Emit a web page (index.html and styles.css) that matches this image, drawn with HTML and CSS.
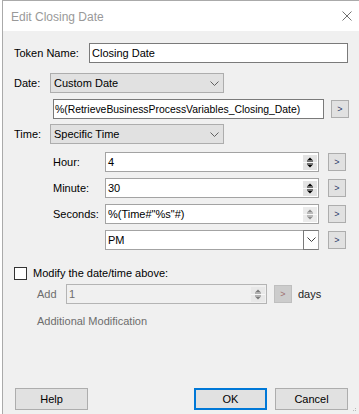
FILE: index.html
```html
<!DOCTYPE html>
<html>
<head>
<meta charset="utf-8">
<link rel="stylesheet" href="styles.css">
</head>
<body>
<div class="win">
  <div class="titlebar">
    <span class="title">Edit Closing Date</span>
    <svg class="close" width="10" height="10" viewBox="0 0 10 10"><path d="M0.5 0.5L9.5 9.5M9.5 0.5L0.5 9.5" stroke="#707070" stroke-width="1" fill="none"/></svg>
  </div>
  <div class="content">
    <div class="row r-token">
      <span class="lbl w-token">Token Name:</span>
      <div class="field f-token">Closing Date</div>
    </div>
    <div class="row r-date">
      <span class="lbl w-date">Date:</span>
      <div class="combo"><span class="ctext">Custom Date</span><svg class="chev" width="9" height="5" viewBox="0 0 9 5"><path d="M0.5 0.5L4.5 4.5L8.5 0.5" stroke="#606060" fill="none"/></svg></div>
    </div>
    <div class="row r-expr">
      <div class="field f-expr">%(RetrieveBusinessProcessVariables_Closing_Date)</div>
      <div class="gt">&gt;</div>
    </div>
    <div class="row r-time">
      <span class="lbl w-date">Time:</span>
      <div class="combo"><span class="ctext">Specific Time</span><svg class="chev" width="9" height="5" viewBox="0 0 9 5"><path d="M0.5 0.5L4.5 4.5L8.5 0.5" stroke="#606060" fill="none"/></svg></div>
    </div>
    <div class="row r-sub r-hour">
      <span class="lbl w-sub">Hour:</span>
      <div class="field f-num"><span class="ftext">4</span>
        <svg class="spin" width="14" height="15" viewBox="0 0 14 15"><rect width="14" height="15" fill="#e3e3e3"/><rect x="0" y="7" width="14" height="1" fill="#f7f7f7"/><path d="M7 2.5L9.5 5H4.5Z" fill="#000"/><rect x="4" y="5.5" width="6" height="1" fill="#000"/><rect x="4" y="8.5" width="6" height="1" fill="#000"/><path d="M4.5 10H9.5L7 12.5Z" fill="#000"/></svg>
      </div>
      <div class="gt">&gt;</div>
    </div>
    <div class="row r-sub">
      <span class="lbl w-sub">Minute:</span>
      <div class="field f-num"><span class="ftext">30</span>
        <svg class="spin" width="14" height="15" viewBox="0 0 14 15"><rect width="14" height="15" fill="#e3e3e3"/><rect x="0" y="7" width="14" height="1" fill="#f7f7f7"/><path d="M7 2.5L9.5 5H4.5Z" fill="#000"/><rect x="4" y="5.5" width="6" height="1" fill="#000"/><rect x="4" y="8.5" width="6" height="1" fill="#000"/><path d="M4.5 10H9.5L7 12.5Z" fill="#000"/></svg>
      </div>
      <div class="gt">&gt;</div>
    </div>
    <div class="row r-sub">
      <span class="lbl w-sub">Seconds:</span>
      <div class="field f-num"><span class="ftext">%(Time#"%s"#)</span>
        <svg class="spin" width="14" height="15" viewBox="0 0 14 15"><rect width="14" height="15" fill="#ebebeb"/><rect x="0" y="7" width="14" height="1" fill="#f9f9f9"/><path d="M7 2.5L9.5 5H4.5Z" fill="#8a8a8a"/><rect x="4" y="5.5" width="6" height="1" fill="#8a8a8a"/><rect x="4" y="8.5" width="6" height="1" fill="#8a8a8a"/><path d="M4.5 10H9.5L7 12.5Z" fill="#8a8a8a"/></svg>
      </div>
      <div class="gt">&gt;</div>
    </div>
    <div class="row r-sub r-pm">
      <div class="pmcombo"><span class="ftext">PM</span><span class="pmbtn"><svg width="9" height="5" viewBox="0 0 9 5"><path d="M0.5 0.5L4.5 4.5L8.5 0.5" stroke="#404040" fill="none"/></svg></span></div>
      <div class="gt">&gt;</div>
    </div>
    <div class="row r-check">
      <span class="box"></span>
      <span class="lbl">Modify the date/time above:</span>
    </div>
    <div class="row r-add">
      <span class="lbl dis w-add">Add</span>
      <div class="field f-add"><span class="ftext dis">1</span>
        <svg class="spin" width="14" height="15" viewBox="0 0 14 15"><rect width="14" height="15" fill="#e8e8e8"/><rect x="0" y="7" width="14" height="1" fill="#f7f7f7"/><path d="M7 2.5L9.5 5H4.5Z" fill="#7a7a7a"/><rect x="4" y="5.5" width="6" height="1" fill="#7a7a7a"/><rect x="4" y="8.5" width="6" height="1" fill="#7a7a7a"/><path d="M4.5 10H9.5L7 12.5Z" fill="#7a7a7a"/></svg>
      </div>
      <div class="gt gt-dis">&gt;</div>
      <span class="lbl days">days</span>
    </div>
    <div class="row r-addmod">
      <span class="lbl dis">Additional Modification</span>
    </div>
    <div class="row r-buttons">
      <div class="btn b-help">Help</div>
      <div class="btn b-ok">OK</div>
      <div class="btn b-cancel">Cancel</div>
    </div>
  </div>
  <svg class="grip" width="4" height="4" viewBox="0 0 4 4"><rect x="2" y="0" width="1" height="1" fill="#bbb"/><rect x="0" y="2" width="1" height="1" fill="#bbb"/><rect x="2" y="2" width="1" height="1" fill="#bbb"/></svg>
</div>
</body>
</html>
```

FILE: styles.css
```css
* { box-sizing: border-box; }
html, body {
  margin: 0;
  padding: 0;
  background: #ffffff;
  width: 359px;
  height: 414px;
  overflow: hidden;
}
body {
  font-family: "Liberation Sans", Arial, sans-serif;
  font-size: 11px;
  color: #000;
}
.win {
  position: relative;
  margin-left: 2px;
  width: 357px;
  height: 414px;
  border-left: 1px solid #aaaaaa;
  border-top: 1px solid #aaaaaa;
  background: #f0f0f0;
  display: flex;
  flex-direction: column;
}
.titlebar {
  height: 30px;
  background: #ffffff;
  display: flex;
  align-items: center;
  justify-content: space-between;
  padding: 0 7px 0 8px;
  flex: none;
}
.title {
  font-size: 12px;
  color: #999999;
  margin-top: 1px;
}
.close { display: block; margin-top: 0; }
.content {
  padding: 12px 0 0 11px;
  display: flex;
  flex-direction: column;
}
.row {
  display: flex;
  align-items: center;
  height: 20px;
}
.lbl { white-space: nowrap; }
.w-token { width: 75px; flex: none; }
.w-date { width: 36px; flex: none; }
.w-sub { width: 52px; flex: none; }
.w-add { width: 29px; flex: none; }
.field {
  height: 20px;
  background: #fff;
  border: 1px solid #7a7a7a;
  display: flex;
  align-items: center;
  padding-left: 2px;
  white-space: nowrap;
  overflow: hidden;
}
.f-token { width: 259px; }
.r-date { margin-top: 10px; }
.combo {
  width: 174px;
  height: 20px;
  background: #e1e1e1;
  border: 1px solid #adadad;
  display: flex;
  align-items: center;
  justify-content: space-between;
  padding: 0 4px 0 3px;
}
.chev { display: block; }
.r-expr { margin-top: 6px; padding-left: 39px; }
.f-expr { width: 271px; padding-left: 1px; font-size: 10.4px; }
.gt {
  width: 18px;
  height: 18px;
  flex: none;
  background: #e1e1e1;
  border: 1px solid #adadad;
  display: flex;
  align-items: center;
  justify-content: center;
  font-size: 9px;
  color: #2b3b6b;
  margin-left: 7px;
}
.r-time { margin-top: 5px; }
.r-sub { padding-left: 39px; margin-top: 6px; }
.r-hour { margin-top: 8px; }
.f-num {
  width: 214px;
  border-color: #a3a3a3;
  justify-content: space-between;
}
.f-num + .gt { margin-left: 9px; }
.ftext { white-space: nowrap; }
.spin { display: block; margin-right: 1px; flex: none; }
.r-pm { padding-left: 91px; }
.pmcombo {
  width: 214px;
  height: 20px;
  background: #fff;
  border: 1px solid #a3a3a3;
  display: flex;
  align-items: center;
  justify-content: space-between;
  padding-left: 2px;
}
.pmcombo + .gt { margin-left: 9px; }
.pmbtn {
  width: 16px;
  height: 20px;
  margin-top: -1px;
  margin-right: -1px;
  border: 1px solid #7a7a7a;
  border-right: 1px solid #a3a3a3;
  display: flex;
  align-items: center;
  justify-content: center;
  background: #fff;
}
.pmbtn svg { display: block; }
.r-check { margin-top: 16px; height: 14px; }
.box {
  width: 13px;
  height: 13px;
  border: 1px solid #333;
  background: #fff;
  flex: none;
  margin-right: 6px;
}
.r-add { margin-top: 4px; padding-left: 23px; }
.dis { color: #6d6d6d; }
.f-add {
  width: 201px;
  background: #f0f0f0;
  border-color: #b4b4b4;
  justify-content: space-between;
}
.gt-dis {
  background: #cccccc;
  border-color: #bfbfbf;
  color: #a07070;
}
.days { margin-left: 6px; color: #222; }
.r-addmod { margin-top: 10px; padding-left: 23px; height: 14px; }
.r-buttons { margin-top: 60px; height: 22px; padding-left: 1px; }
.btn {
  width: 73px;
  height: 22px;
  background: #e1e1e1;
  border: 1px solid #adadad;
  display: flex;
  align-items: center;
  justify-content: center;
  flex: none;
}
.b-ok {
  margin-left: 106px;
  border: 2px solid #0078d7;
}
.b-cancel { margin-left: 8px; }
.grip { position: absolute; right: 2px; bottom: 2px; display: block; }
```
